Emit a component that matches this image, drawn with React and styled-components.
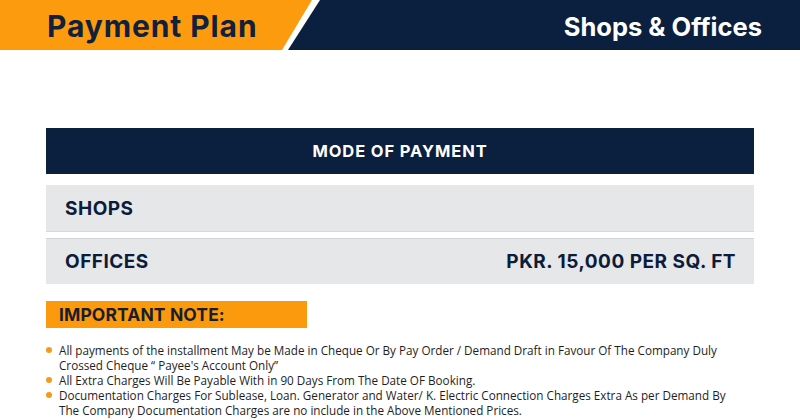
import React from 'react';
import styled, { createGlobalStyle } from 'styled-components';

const GlobalStyle = createGlobalStyle`
  body {
    margin: 0;
    background: #ffffff;
    font-family: Inter, "Open Sans", sans-serif;
  }
`;

const Page = styled.div`
  width: 800px;
  height: 420px;
  overflow: hidden;
  background: #ffffff;
`;

// Header: orange title block and navy block share one grid cell, cut on a slant
const Header = styled.header`
  display: grid;
  height: 50px;
`;

const HeaderBlock = styled.div`
  grid-area: 1 / 1;
  display: flex;
  align-items: center;
  justify-content: ${props => (props.end ? 'flex-end' : 'flex-start')};
  padding: ${props => (props.end ? '2px 38px 0 0' : '2px 0 0 47px')};
  background: ${props => props.bg};
  clip-path: ${props => props.clip};
`;

const Title = styled.h1`
  margin: 0;
  font-family: Inter, sans-serif;
  font-weight: 700;
  font-size: ${props => props.size};
  letter-spacing: ${props => props.spacing || '0'};
  color: ${props => props.color};
`;

const Content = styled.main`
  padding: 78px 46px 0;
`;

const Table = styled.section`
  display: flex;
  flex-direction: column;
`;

const TableHead = styled.div`
  height: 46px;
  display: flex;
  align-items: center;
  justify-content: center;
  background: #0b1f3f;
  color: #ffffff;
  font-weight: 700;
  font-size: 16.5px;
  letter-spacing: 0.9px;
  margin-bottom: 11px;
`;

const Row = styled.div`
  height: ${props => props.h};
  display: flex;
  align-items: center;
  justify-content: space-between;
  padding: 0 18px 0 19px;
  background: #e6e7e9;
  border-top: ${props => (props.top ? '1px solid #d3d4d7' : 'none')};
  border-bottom: ${props => (props.bottom ? '1px solid #d6d7da' : 'none')};
  margin-bottom: ${props => props.mb || '0'};
  color: #0c1c3a;
  font-weight: 700;
  font-size: 19px;
  letter-spacing: 0.5px;
`;

const NoteTag = styled.div`
  width: 261px;
  height: 27px;
  margin-top: 17px;
  box-sizing: border-box;
  padding-left: 13px;
  display: flex;
  align-items: center;
  background: #fc9a0e;
  color: #1a1d2b;
  font-weight: 700;
  font-size: 17.5px;
  letter-spacing: 0.1px;
`;

const Notes = styled.ul`
  list-style: none;
  margin: 15px 0 0;
  padding: 0;
  font-family: "Open Sans", sans-serif;
  font-size: 11.7px;
  line-height: 15px;
  color: #1e1e1e;
`;

const Note = styled.li`
  position: relative;
  padding-left: 13px;

  &::before {
    content: '';
    position: absolute;
    left: 0;
    top: 4px;
    width: 6px;
    height: 6px;
    border-radius: 50%;
    background: #f59a1b;
  }
`;

const rows = [
  { label: 'SHOPS', value: '', h: '46px', bottom: true, mb: '6px' },
  { label: 'OFFICES', value: 'PKR. 15,000 PER SQ. FT', h: '45px', top: true },
];

export default function App() {
  return (
    <Page>
      <GlobalStyle />
      <Header>
        <HeaderBlock
          end
          bg="#0b1f3f"
          clip="polygon(320px 0, 100% 0, 100% 100%, 288px 100%)"
        >
          <Title size="25.5px" color="#ffffff" spacing="0">Shops &amp; Offices</Title>
        </HeaderBlock>
        <HeaderBlock bg="#fd9b0f" clip="polygon(0 0, 312px 0, 282px 100%, 0 100%)">
          <Title size="30px" color="#10203d" spacing="0.9px">Payment Plan</Title>
        </HeaderBlock>
      </Header>

      <Content>
        <Table>
          <TableHead>MODE OF PAYMENT</TableHead>
          {rows.map(r => (
            <Row key={r.label} h={r.h} top={r.top} bottom={r.bottom} mb={r.mb}>
              <span>{r.label}</span>
              <span>{r.value}</span>
            </Row>
          ))}
        </Table>

        <NoteTag>IMPORTANT NOTE:</NoteTag>

        <Notes>
          <Note>
            All payments of the installment May be Made in Cheque Or By Pay Order / Demand Draft in Favour Of The Company Duly
            <br />
            Crossed Cheque “ Payee's Account Only”
          </Note>
          <Note>All Extra Charges Will Be Payable With in 90 Days From The Date OF Booking.</Note>
          <Note>
            Documentation Charges For Sublease, Loan. Generator and Water/ K. Electric Connection Charges Extra As per Demand By
            <br />
            The Company Documentation Charges are no include in the Above Mentioned Prices.
          </Note>
        </Notes>
      </Content>
    </Page>
  );
}
